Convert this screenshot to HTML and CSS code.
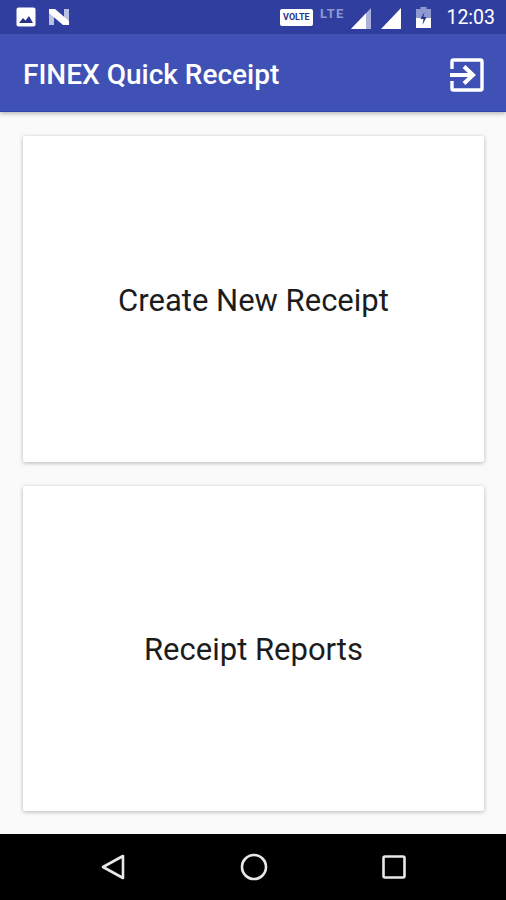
FILE: index.html
```html
<!DOCTYPE html>
<html lang="en">
<head>
    <meta charset="UTF-8">
    <meta name="viewport" content="width=device-width, initial-scale=1.0">
    <title>FINEX Quick Receipt</title>
    <link rel="stylesheet" href="styles.css">
</head>
<body>
    <div class="status-bar">
        <div class="status-left">
            <svg class="icon-picture" width="20" height="20" viewBox="0 0 20 20">
                <rect x="0.5" y="0.5" width="19" height="19" rx="2" fill="#fff"/>
                <path d="M3 16 L7 11 L9.5 13.5 L13 9 L17 16 Z" fill="#27348b"/>
            </svg>
            <svg class="icon-n" width="21" height="18" viewBox="0 0 21 18">
                <path d="M0 1 H5 V17 H0 Z" fill="#b9c0e2"/>
                <path d="M15 1 H20 V17 H15 Z" fill="#b9c0e2"/>
                <path d="M0 1 H6 L20 13 V17 H14 L0 5 Z" fill="#fff"/>
            </svg>
        </div>
        <div class="status-right">
            <span class="volte">VOLTE</span>
            <span class="lte">LTE</span>
            <svg class="signal" width="20" height="21" viewBox="0 0 20 21">
                <path d="M0 21 L20 0 V21 Z" fill="#aab2dc"/>
                <path d="M0 21 L15 5.25 V21 Z" fill="#fff"/>
            </svg>
            <svg class="signal signal-full" width="20" height="21" viewBox="0 0 20 21">
                <path d="M0 21 L20 0 V21 Z" fill="#fff"/>
            </svg>
            <svg class="battery" width="15" height="21" viewBox="0 0 15 21">
                <path d="M4.5 0 H10.5 V2 H15 V21 H0 V2 H4.5 Z" fill="#8f99cf"/>
                <path d="M0 11 H15 V21 H0 Z" fill="#fff"/>
                <path d="M8.5 5 L4.5 12 H7.5 L6.5 18 L10.5 10 H7.5 Z" fill="#27348b"/>
            </svg>
            <span class="clock">12:03</span>
        </div>
    </div>

    <header class="toolbar">
        <h1>FINEX Quick Receipt</h1>
        <svg class="icon-exit" width="34" height="34" viewBox="0 0 34 34">
            <path d="M2 11 V3.5 Q2 2 3.5 2 H30.5 Q32 2 32 3.5 V30.5 Q32 32 30.5 32 H3.5 Q2 32 2 30.5 V23" fill="none" stroke="#fff" stroke-width="3.4"/>
            <path d="M0 17 H22" fill="none" stroke="#fff" stroke-width="4"/>
            <path d="M14 8.5 L23 17 L14 25.5" fill="none" stroke="#fff" stroke-width="4"/>
        </svg>
    </header>

    <main class="content">
        <div class="card">Create New Receipt</div>
        <div class="card">Receipt Reports</div>
    </main>

    <nav class="nav-bar">
        <svg width="26" height="28" viewBox="0 0 26 28">
            <path d="M3 14 L23 3 V25 Z" fill="none" stroke="#e8e8e8" stroke-width="2.6" stroke-linejoin="round"/>
        </svg>
        <svg width="28" height="28" viewBox="0 0 28 28">
            <circle cx="14" cy="14" r="12" fill="none" stroke="#e8e8e8" stroke-width="2.6"/>
        </svg>
        <svg width="24" height="24" viewBox="0 0 24 24">
            <rect x="1.5" y="1.5" width="21" height="21" rx="1.5" fill="none" stroke="#e8e8e8" stroke-width="2.6"/>
        </svg>
    </nav>
</body>
</html>
```

FILE: styles.css
```css
body {
    font-family: 'Roboto', 'Liberation Sans', sans-serif;
    background-color: #fafafa;
    margin: 0;
    height: 900px;
    display: flex;
    flex-direction: column;
    overflow: hidden;
}

.status-bar {
    height: 34px;
    background-color: #303f9f;
    display: flex;
    align-items: center;
    justify-content: space-between;
    padding: 0 11px 0 16px;
    flex-shrink: 0;
}

.status-left,
.status-right {
    display: flex;
    align-items: center;
}

.icon-n {
    margin-left: 13px;
}

.volte {
    width: 33px;
    background-color: #fff;
    color: #27348b;
    font-size: 9px;
    font-weight: bold;
    line-height: 17px;
    text-align: center;
    border-radius: 2px;
}

.lte {
    color: #8f99cf;
    font-size: 13px;
    font-weight: bold;
    letter-spacing: 1.2px;
    margin-left: 7px;
    margin-bottom: 8px;
}

.signal {
    margin-left: 7px;
    margin-top: 3px;
}

.signal-full {
    margin-left: 10px;
}

.battery {
    margin-left: 15px;
    margin-top: 1px;
}

.clock {
    color: #fff;
    font-size: 19.5px;
    margin-left: 15px;
}

.toolbar {
    height: 78px;
    background-color: #3f51b5;
    box-shadow: 0 2px 4px rgba(0, 0, 0, 0.25);
    border-bottom: 1px solid #2f45ae;
    box-sizing: border-box;
    display: flex;
    align-items: center;
    justify-content: space-between;
    padding: 4px 22px 0 23px;
    flex-shrink: 0;
}

.toolbar h1 {
    color: #fff;
    font-size: 28px;
    font-weight: 500;
    margin: 0;
}

.content {
    flex: 1;
    display: flex;
    flex-direction: column;
    gap: 24px;
    padding: 24px 22px 23px 23px;
}

.card {
    flex: 1;
    background-color: #fff;
    box-shadow: 0 1px 4px rgba(0, 0, 0, 0.28);
    border-radius: 2px;
    display: flex;
    align-items: center;
    justify-content: center;
    padding-top: 3px;
    color: #1c1c1c;
    font-size: 31px;
}

.nav-bar {
    height: 66px;
    background-color: #000;
    display: flex;
    align-items: center;
    justify-content: space-between;
    padding: 0 100px;
    flex-shrink: 0;
}
```
